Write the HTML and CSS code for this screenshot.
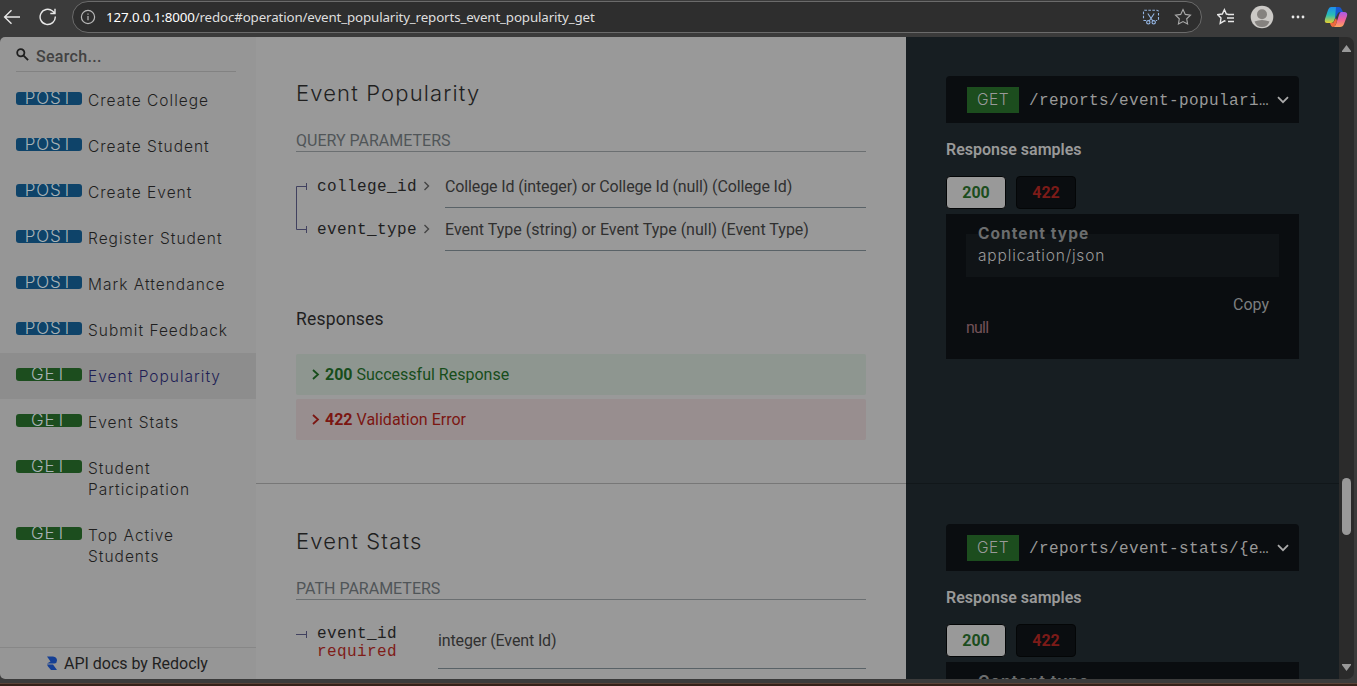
FILE: index.html
```html
<!DOCTYPE html>
<html lang="en">
<head>
<meta charset="utf-8">
<title>Event Popularity</title>
<link rel="stylesheet" href="styles.css">
</head>
<body>
<header class="toolbar">
  <svg class="back" width="18" height="18" viewBox="0 0 18 18"><path d="M17 9H2M8.5 2.2 1.6 9l6.9 6.8"/></svg>
  <svg class="reload" width="18" height="18" viewBox="0 0 18 18"><path d="M16.3 8.5A7.6 7.6 0 1 1 13.5 3L16 5.3M16 .8v4.7h-4.7"/></svg>
  <div class="address">
    <svg class="info" width="16" height="16" viewBox="0 0 16 16"><circle cx="8" cy="8" r="6.6"/><path d="M8 7v4.3M8 4.5v1.2"/></svg>
    <span class="url">127.0.0.1:8000<span class="path">/redoc#operation/event_popularity_reports_event_popularity_get</span></span>
    <svg class="snip" width="18" height="18" viewBox="0 0 18 18"><path stroke-dasharray="2.6 1.4" d="M4 12.5H2.5Q1.5 12.5 1.5 11V4q0-1.800 1.500-1.800h12q1.500 0 1.500 1.800v7q0 1.500-1.500 1.500H14"/><path d="m5.800 5.500 5 7.500M12.200 5.500l-5 7.500"/><circle cx="6.300" cy="14.300" r="1.700"/><circle cx="11.700" cy="14.300" r="1.700"/></svg>
    <svg class="star" width="18" height="18" viewBox="0 0 18 18"><path d="m9 1.500 2.300 4.900 5.200.7-3.800 3.700.9 5.300L9 13.600l-4.600 2.500.9-5.300L1.500 7.100l5.200-.7z"/></svg>
  </div>
  <svg class="favs" width="18" height="18" viewBox="0 0 18 18"><path d="m11.200 6.200-1.800-.2L7.400 1.700 5.300 6l-4.600.6 3.300 3.400-.8 5.300 4.200-2.500 1.100.6M11 6.500h6M10 10h7M11 13.500h6"/></svg>
  <svg class="avatar" width="24" height="24" viewBox="0 0 24 24"><circle cx="12" cy="12" r="11.300" fill="#cbc9c6"/><circle cx="12" cy="9.300" r="5" fill="#85827f"/><path d="M4.500 16.500q7.500-3 15 0-2 5.500-7.500 5.500t-7.500-5.500" fill="#85827f"/></svg>
  <svg class="dots" width="16" height="6" viewBox="0 0 16 6"><circle cx="3" cy="3" r="1.400"/><circle cx="8" cy="3" r="1.400"/><circle cx="13" cy="3" r="1.400"/></svg>
  <svg class="copilot" width="24" height="24" viewBox="0 0 24 24">
    <defs>
      <linearGradient id="cool" x1="0" y1="0" x2="0" y2="1"><stop offset="0" stop-color="#1d8df0"/><stop offset=".5" stop-color="#28bdb4"/><stop offset="1" stop-color="#e8cf2d"/></linearGradient>
      <linearGradient id="warm" x1="0" y1="0" x2="0" y2="1"><stop offset="0" stop-color="#a75bea"/><stop offset=".5" stop-color="#f0609d"/><stop offset="1" stop-color="#ffa65b"/></linearGradient>
    </defs>
    <path fill="url(#cool)" d="M7 2h8l-5 14q-1 2-3 2H3Q0 18 1 14L4 5q1-3 3-3"/>
    <path fill="#1857cf" d="M12 2h3q2 0 3 3l1 2h-3q-2 0-3 3l-2 4z"/>
    <path fill="url(#warm)" d="M17 7h3q4 0 3 4l-3 8q-1 3-4 3H9q2 0 3-3l3-9q1-3 2-3"/>
    <path fill="#ef6a3c" d="M6 18h3l3-5 1 3-1 3q-1 3-3 3-2 0-3-4"/>
  </svg>
</header>
<div class="page">
  <nav class="sidebar">
    <div class="search"><svg width="13" height="13" viewBox="0 0 13 13"><circle cx="4.800" cy="4.800" r="3.600"/><path d="m7.600 7.600 4.500 4.500"/></svg><span>Search...</span></div>
    <ul class="menu">
      <li><b class="badge post">POST</b><span>Create College</span></li>
      <li><b class="badge post">POST</b><span>Create Student</span></li>
      <li><b class="badge post">POST</b><span>Create Event</span></li>
      <li><b class="badge post">POST</b><span>Register Student</span></li>
      <li><b class="badge post">POST</b><span>Mark Attendance</span></li>
      <li><b class="badge post">POST</b><span>Submit Feedback</span></li>
      <li class="active"><b class="badge get">GET</b><span>Event Popularity</span></li>
      <li><b class="badge get">GET</b><span>Event Stats</span></li>
      <li><b class="badge get">GET</b><span>Student<br>Participation</span></li>
      <li><b class="badge get">GET</b><span>Top Active<br>Students</span></li>
    </ul>
    <div class="credit"><svg width="12" height="15" viewBox="0 0 12 15"><path d="M1 .5h6Q11 1 11 4.500 11 7 8.500 7.500H1L4.500 5.500zM1 8.500h6l4 5.500H5L2 10.500z"/></svg><span>API docs by Redocly</span></div>
  </nav>
  <main class="content">
    <section class="operation">
      <div class="docs">
        <h2>Event Popularity</h2>
        <h5>Query Parameters</h5>
        <div class="params">
          <svg class="tree" width="11" height="86" viewBox="0 0 11 86"><path d="M10.500 18v7M10.500 21.500H.5v43h10M10.500 61v7"/></svg>
          <div class="names"><div>college_id<svg width="7" height="10" viewBox="0 0 7 10"><path d="m1.500 1 4 4-4 4"/></svg></div><div>event_type<svg width="7" height="10" viewBox="0 0 7 10"><path d="m1.500 1 4 4-4 4"/></svg></div></div>
          <div class="types"><div class="tight">College Id (integer) or College Id (null) (College Id)</div><div>Event Type (string) or Event Type (null) (Event Type)</div></div>
        </div>
        <h3>Responses</h3>
        <div class="response ok"><svg width="8" height="12" viewBox="0 0 8 12"><path d="m1 1 5 4.500-5 4.500"/></svg><b>200</b><span>Successful Response</span></div>
        <div class="response error"><svg width="8" height="12" viewBox="0 0 8 12"><path d="m1 1 5 4.500-5 4.500"/></svg><b>422</b><span>Validation Error</span></div>
      </div>
      <div class="samples">
        <div class="endpoint"><span class="verb">GET</span><code>/reports/event-populari…</code><svg width="12" height="8" viewBox="0 0 12 8"><path d="m1 1.200 5 5 5-5"/></svg></div>
        <h4>Response samples</h4>
        <div class="tabs"><span class="tab selected">200</span><span class="tab">422</span></div>
        <div class="sample"><div class="media"><b>Content type</b><span>application/json</span></div><div class="copy">Copy</div><div class="null">null</div></div>
      </div>
    </section>
    <section class="operation">
      <div class="docs">
        <h2>Event Stats</h2>
        <h5>Path Parameters</h5>
        <div class="params single">
          <svg class="tree" width="11" height="69" viewBox="0 0 11 69"><path d="M0 21.500h10.500M10.500 18v7"/></svg>
          <div class="names"><div>event_id<em>required</em></div></div>
          <div class="types"><div class="tight">integer (Event Id)</div></div>
        </div>
      </div>
      <div class="samples">
        <div class="endpoint"><span class="verb">GET</span><code>/reports/event-stats/{e…</code><svg width="12" height="8" viewBox="0 0 12 8"><path d="m1 1.200 5 5 5-5"/></svg></div>
        <h4>Response samples</h4>
        <div class="tabs"><span class="tab selected">200</span><span class="tab">422</span></div>
        <div class="sample"><div class="media"><b>Content type</b><span>application/json</span></div></div>
      </div>
    </section>
  </main>
  <div class="scrollbar"><svg width="9" height="7" viewBox="0 0 9 7"><path d="M4.500 0 9 6v1H0V6z"/></svg><i></i><svg class="down" width="9" height="7" viewBox="0 0 9 7"><path d="M0 0h9v1L4.500 7 0 1z"/></svg></div>
</div>
<footer class="edge"></footer>
</body>
</html>
```
FILE: styles.css
```css
* { box-sizing: border-box; }
body { margin: 0; width: 1357px; height: 686px; overflow: hidden; background: #3b3b3b; font: 16px/20px Roboto, sans-serif; color: #1f1f1f; display: flex; flex-direction: column; }
svg { display: block; flex: none; fill: none; }
h2, h3, h4, h5, ul { margin: 0; padding: 0; font-weight: 400; }

.toolbar { height: 37px; flex: none; display: flex; align-items: center; padding: 0 9px 3px 3px; stroke: #e8e8e8; stroke-width: 1.4; }
.reload { margin-left: 18px; }
.address { width: 1130px; height: 32px; margin-left: 15px; border: 1px solid #6b6b6b; border-radius: 16px; background: #2e2e2e; display: flex; align-items: center; padding: 0 9px 0 7px; }
.info { stroke: #b8b8b8; stroke-width: 1.2; }
.url { flex: 1; margin-left: 10px; font: 13.33px/20px "Noto Sans", sans-serif; color: #fff; stroke: none; letter-spacing: -.135px; }
.path { color: #dedede; }
.snip { stroke: #94b5e2; stroke-width: 1.1; }
.star { margin-left: 14px; stroke: #aaa; stroke-width: 1.1; }
.favs { margin-left: 15px; }
.avatar, .dots, .copilot { stroke: none; }
.avatar { margin-left: 15px; }
.dots { margin-left: 16px; fill: #e8e8e8; }
.copilot { margin-left: 18px; }

.page { height: 642px; flex: none; width: 1354px; display: flex; border-radius: 5px 7px 7px 5px; overflow: hidden; background: #2b2b2b; }
.sidebar { width: 256px; flex: none; background: #969696; display: flex; flex-direction: column; }
.search { height: 35px; margin: 0 20px 5px 16px; border-bottom: 1px solid #828282; display: flex; align-items: center; color: #424242; font-weight: 500; padding-top: 6px; letter-spacing: .3px; }
.search svg { stroke: #1f1f1f; stroke-width: 1.8; margin: -6px 7px 0 0; }
.menu { list-style: none; flex: 1; }
.menu li { display: flex; padding: 13px 0 12px 16px; font: 300 15.5px/21px Inter, sans-serif; letter-spacing: 1px; }
.menu .active { background: #8d8d8d; color: #1e1e55; }
.badge { width: 66px; height: 13px; flex: none; margin: 2px 6px 0 0; border-radius: 3px; overflow: hidden; text-align: center; font-size: 17px; font-weight: 300; line-height: 13px; letter-spacing: .8px; color: #a8b2b6; }
.post { background: #0e4369; }
.get { background: #1c4d1e; }
.credit { height: 32px; border-top: 1px solid #878787; display: flex; align-items: center; justify-content: center; gap: 6px; padding-right: 2px; letter-spacing: -.03px; }
.credit svg { fill: #153f94; }

.content { width: 1083px; flex: none; margin-top: -1px; }
.operation { display: flex; height: 448px; position: relative; }
.operation::after { content: ""; position: absolute; left: 0; right: 0; bottom: 0; height: 1px; background: rgba(0, 0, 0, .22); }
.docs { width: 650px; background: #999; padding: 42px 40px 0; }
h2 { font: 300 22px/30px Inter, sans-serif; letter-spacing: 1.15px; }
h5 { height: 22px; margin-top: 22px; border-bottom: 1px solid #6b6f71; font-size: 16px; line-height: 22px; text-transform: uppercase; color: #505558; }
.params { display: flex; margin-top: 13px; }
.tree { stroke: #41415f; }
.names { width: 138px; padding-left: 10px; font: 16px/20px "Liberation Mono", monospace; letter-spacing: .4px; }
.names > div { height: 43px; padding-top: 12px; }
.names svg { display: inline-block; margin-left: 6px; stroke: #444; stroke-width: 1.4; }
.types { flex: 1; color: #303030; }
.types div { height: 43px; padding-top: 12px; border-bottom: 1px solid #596267; }
.types .tight { letter-spacing: -.13px; }
.single .names { width: 131px; }
.single .names > div { line-height: 18px; height: auto; }
.single em { display: block; font-style: normal; color: #7f1c18; }
.single .types div { height: 56px; padding-top: 18px; }
h3 { font-size: 17.5px; line-height: 24px; letter-spacing: .2px; margin: 56px 0 23px; }
.response { height: 41px; margin-bottom: 4px; padding: 0 16px; border-radius: 2px; display: flex; align-items: center; }
.response svg { stroke: currentColor; stroke-width: 1.8; }
.response b { margin: 0 4px 0 5px; }
.ok { background: #8e9690; color: #174d1b; }
.error { background: #988e8f; color: #7b1612; }

.samples { width: 433px; background: #171e22; padding: 40px 40px 0; color: #999; overflow: hidden; }
.endpoint { height: 47px; background: #0a0d10; border-radius: 4px 4px 0 0; display: flex; align-items: center; padding: 0 10px 0 21px; }
.verb { width: 52px; height: 26px; background: #1c4d1e; text-align: center; font: 300 15.5px/26px Inter, sans-serif; letter-spacing: .4px; }
code { flex: 1; margin-left: 10px; padding-top: 2px; font: 16px/20px "Liberation Mono", monospace; letter-spacing: .4px; }
.endpoint svg { stroke: #aaa; stroke-width: 1.8; }
h4 { font-weight: 600; line-height: 20px; margin: 17px 0 16px; }
.tabs { display: flex; gap: 10px; height: 33px; margin-bottom: 5px; }
.tab { width: 60px; border: 1px solid #040607; border-radius: 4px; background: #0a0d10; color: #7c1b18; font-weight: 700; text-align: center; line-height: 31px; }
.selected { background: #999; color: #1c4d1e; }
.sample { height: 145px; background: #0a0d10; padding: 20px 20px 0; }
.media { height: 43px; background: #101417; padding-left: 12px; font: 300 15.5px/22px Inter, sans-serif; letter-spacing: .85px; display: flex; flex-direction: column; }
.media b { margin-top: -11px; font-weight: 700; color: #6b6d6e; letter-spacing: 1.05px; }
.copy { text-align: right; padding-right: 10px; margin-top: 18px; color: #7c7e7f; }
.null { color: #735158; margin-top: 3px; letter-spacing: -.8px; }

.scrollbar { width: 15px; display: flex; flex-direction: column; align-items: center; padding: 8px 0; }
.scrollbar svg { fill: #999; }
.scrollbar i { width: 9px; height: 57px; border-radius: 5px; background: #999; margin: 426px 0 auto; }
.edge { height: 3px; margin-top: 4px; background: #352119; border-top: 1px solid #5b4439; }
```
